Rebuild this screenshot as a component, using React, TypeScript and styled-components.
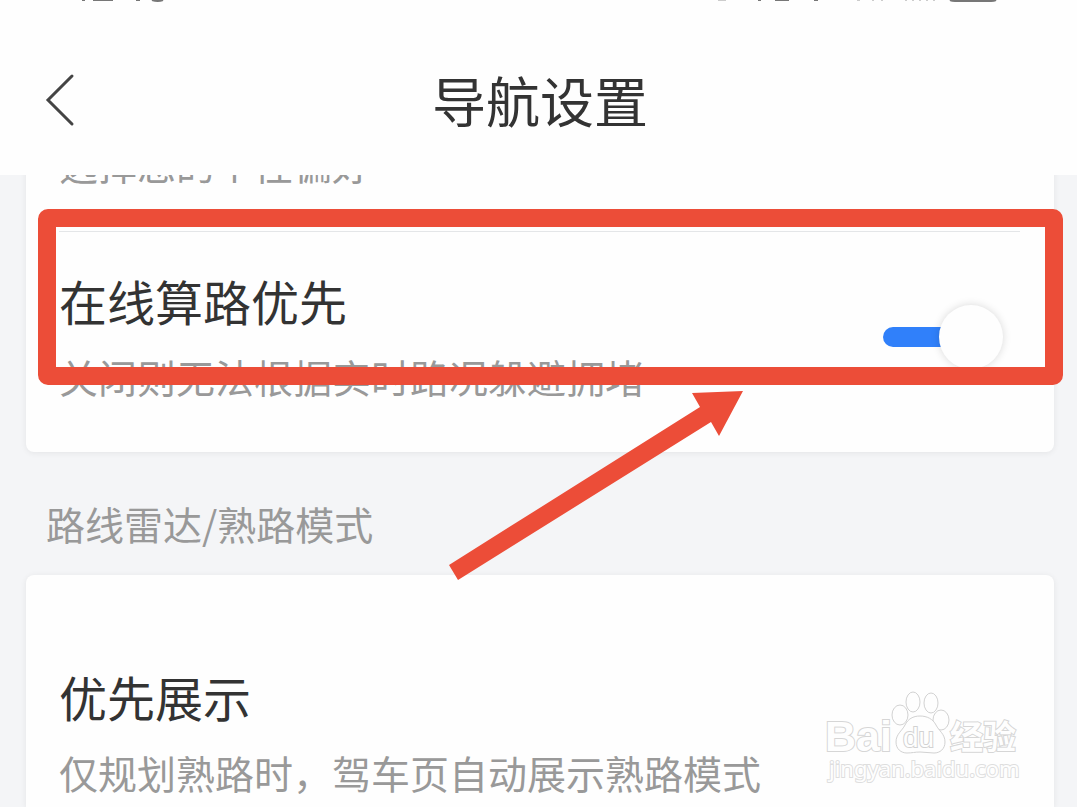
import React from "react";
import styled, { createGlobalStyle } from "styled-components";

const ACCENT = "#ec4d38";

const GlobalStyle = createGlobalStyle`
  *, *::before, *::after { box-sizing: border-box; }
  body {
    margin: 0;
    background: #f4f5f7;
    color: #333;
    font-family: "Noto Sans CJK SC", "Noto Sans", sans-serif;
  }
  h1, h2, h3, p { margin: 0; font-weight: 400; }
`;

const Screen = styled.div`
  position: relative;
  display: flex;
  flex-direction: column;
  height: 100vh;
  overflow: hidden;
`;

const Header = styled.header`
  flex: none;
  display: flex;
  flex-direction: column;
  background: #fefefe;
`;

const StatusBar = styled.div`
  display: flex;
  justify-content: space-between;
  height: 4px;
  padding: 0 76px 0 80px;
`;

const TitleBar = styled.div`
  display: grid;
  grid-template-columns: 120px 1fr 117px;
  align-items: center;
  padding: 64px 0 43px;
`;

const BackButton = styled.button`
  display: flex;
  padding: 0 0 0 44px;
  border: 0;
  background: none;
  color: #444;
  cursor: pointer;
`;

const PageTitle = styled.h1`
  font-size: 54px;
  line-height: 64px;
  text-align: center;
  color: #333;
`;

const Content = styled.main`
  flex: 1;
  display: flex;
  flex-direction: column;
  overflow: hidden;
  padding: 0 23px 0 26px;
`;

const Card = styled.section<{ $scrolled?: boolean; $fill?: boolean }>`
  flex: ${(p) => (p.$fill ? "1 0 auto" : "none")};
  margin-top: ${(p) => (p.$scrolled ? "-38px" : "0")};
  border-radius: ${(p) => (p.$fill ? "8px 8px 0 0" : "8px")};
  background: #fefefe;
  box-shadow: 0 1px 6px rgba(0, 0, 0, 0.07);
`;

const Row = styled.div<{ $top: number; $bottom: number }>`
  position: relative;
  display: flex;
  align-items: center;
  justify-content: space-between;
  padding: ${(p) => p.$top}px 34px ${(p) => p.$bottom}px 33px;
`;

const Divider = styled.hr`
  height: 1px;
  margin: 0 34px 0 33px;
  border: 0;
  background: #e4e6e8;
`;

const Labels = styled.div`
  display: flex;
  flex-direction: column;
  gap: 16px;
`;

const RowTitle = styled.label`
  font-size: 48px;
  line-height: 68px;
  color: #333;
  white-space: nowrap;
`;

const Note = styled.p`
  font-size: 39px;
  line-height: 52px;
  color: #999;
  white-space: nowrap;
`;

const SectionHeading = styled.h2`
  flex: none;
  padding: 45px 20px 26px;
  font-size: 39px;
  line-height: 52px;
  color: #999;
`;

const Toggle = styled.input`
  appearance: none;
  position: relative;
  flex: none;
  width: 120px;
  height: 64px;
  margin: 6px 17px 0 0;
  cursor: pointer;

  &::before {
    content: "";
    position: absolute;
    top: 22px;
    left: 0;
    width: 90px;
    height: 20px;
    border-radius: 10px;
    background: #c9ccd1;
  }
  &::after {
    content: "";
    position: absolute;
    top: 0;
    left: 0;
    width: 64px;
    height: 64px;
    border-radius: 50%;
    background: #fefefe;
    box-shadow: 0 0 8px rgba(0, 0, 0, 0.15);
  }
  &:checked::before { background: #3080fa; }
  &:checked::after { left: 56px; }
`;

const Highlight = styled.div`
  position: absolute;
  z-index: 2;
  top: -23px;
  right: -9px;
  bottom: 67px;
  left: 12px;
  border: 18px solid ${ACCENT};
  border-radius: 10px;
  pointer-events: none;
`;

const Arrow = styled.svg`
  position: absolute;
  top: 160px;
  left: 390px;
`;

const Watermark = styled.svg`
  position: absolute;
  right: 52px;
  bottom: 19px;
  pointer-events: none;
`;

function StatusMarksLeft() {
  return (
    <svg width="90" height="4" viewBox="0 0 90 4" fill="none" stroke="#777" strokeWidth="2" aria-hidden="true">
      <path d="M2 0h3M13 0H33M56 0h4M72 0q6 2 11 0" />
    </svg>
  );
}

function StatusMarksRight() {
  return (
    <svg width="290" height="4" viewBox="0 0 290 4" fill="none" stroke="#777" strokeWidth="2" aria-hidden="true">
      <path d="M47 0h3M64 0h14M103 0h4" />
      <path d="M7 0h8M146 0h3M161 0h2M170 0h2M194 0h2M201 0h2M208 0h2M215 0h2M222 0h2" stroke="#ccc" />
      <path d="M239 0q2 1 5 1h36q3 0 5-1" />
    </svg>
  );
}

function BaiduMark() {
  return (
    <Watermark width="202" height="102" viewBox="823 686 202 102" role="img" aria-label="Baidu 经验">
      <g fill="#fefefe" stroke="#d6d6d6" strokeWidth="2" paintOrder="stroke">
        <text x="825" y="751" fontFamily="Liberation Sans, sans-serif" fontWeight="700" fontSize="43">Bai</text>
        <text x="950" y="749" fontFamily="Noto Sans CJK SC, sans-serif" fontWeight="700" fontSize="33">经验</text>
        <text x="829" y="777" fontFamily="Noto Sans, sans-serif" fontSize="22" stroke="#dedede">jingyan.baidu.com</text>
      </g>
      <g fill="#fefefe" stroke="#d2d2d2" strokeWidth="1">
        <ellipse cx="900" cy="715" rx="8" ry="10" />
        <ellipse cx="913" cy="702" rx="7" ry="10" />
        <ellipse cx="931" cy="703" rx="7" ry="10" />
        <ellipse cx="941" cy="720" rx="8" ry="10" />
        <path d="M920 716c-7 0-12 3-15 9-3 6-9 9-9 17 0 7 5 11 11 11 5 0 8-1 13-1s9 1 14 1c6 0 11-4 11-11 0-8-6-11-9-17-3-6-9-9-16-9z" />
      </g>
      <text x="903" y="747" fontFamily="Liberation Sans, sans-serif" fontSize="28" fill="#fefefe" stroke="#d2d2d2" strokeWidth="2" paintOrder="stroke">du</text>
    </Watermark>
  );
}

export default function App() {
  return (
    <>
      <GlobalStyle />
      <Screen>
        <Header>
          <StatusBar>
            <StatusMarksLeft />
            <StatusMarksRight />
          </StatusBar>
          <TitleBar>
            <BackButton type="button" aria-label="返回">
              <svg width="32" height="56" viewBox="0 0 32 56" fill="none" stroke="currentColor" strokeWidth="3" strokeLinecap="round">
                <path d="M28 4 4 28l24 24" />
              </svg>
            </BackButton>
            <PageTitle>导航设置</PageTitle>
          </TitleBar>
        </Header>

        <Content>
          <Card $scrolled>
            <Row $top={0} $bottom={42}>
              <Note>选择您的个性偏好</Note>
            </Row>
            <Divider />
            <Row $top={34} $bottom={50}>
              <Labels>
                <RowTitle htmlFor="online-route">在线算路优先</RowTitle>
                <Note>关闭则无法根据实时路况躲避拥堵</Note>
              </Labels>
              <Toggle id="online-route" type="checkbox" role="switch" defaultChecked />
              <Highlight>
                <Arrow width="300" height="196" viewBox="446 387 300 196" aria-hidden="true">
                  <path d="M743 391 719 436 711 422 458 580 449 565 700 407 692 393z" fill={ACCENT} />
                </Arrow>
              </Highlight>
            </Row>
          </Card>

          <SectionHeading>路线雷达/熟路模式</SectionHeading>

          <Card $fill>
            <Row $top={87} $bottom={6}>
              <Labels>
                <RowTitle as="h3">优先展示</RowTitle>
                <Note>仅规划熟路时，驾车页自动展示熟路模式</Note>
              </Labels>
            </Row>
          </Card>
        </Content>
        <BaiduMark />
      </Screen>
    </>
  );
}
